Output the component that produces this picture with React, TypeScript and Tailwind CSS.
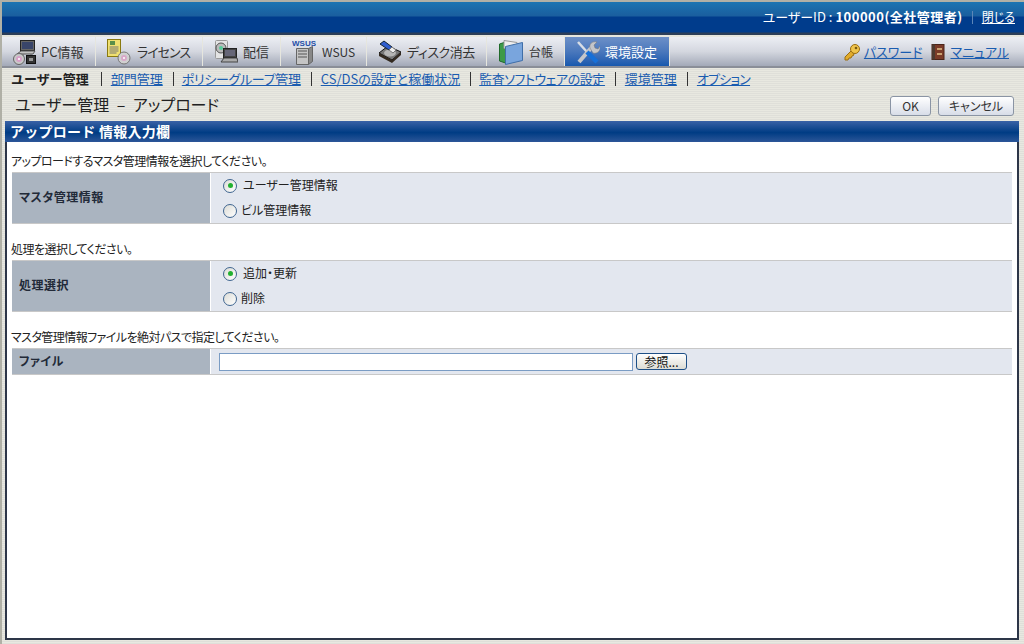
import React from 'react';

const font = "font-['Noto_Sans_CJK_JP','Liberation_Sans',sans-serif] [font-feature-settings:'palt']";

function PcIcon() {
  return (
    <svg width="24" height="26" viewBox="0 0 24 26" className="shrink-0">
      <rect x="7.5" y="1.5" width="14" height="10" fill="#666" stroke="#222" />
      <rect x="9" y="3" width="11" height="7" fill="#39456a" />
      <path d="M4 15l4-3h14l-2 3z" fill="#c2c2c2" stroke="#555" />
      <path d="M10 15v4M18 15v4" stroke="#666" />
      <circle cx="6" cy="20" r="5.5" fill="#c8c8c8" stroke="#666" />
      <circle cx="6" cy="20" r="3" fill="#d8a0c8" />
      <circle cx="6" cy="20" r="1" fill="#fff" />
      <rect x="13.5" y="16.5" width="9" height="8" fill="#333" stroke="#111" />
      <rect x="16" y="19" width="4" height="3" fill="#999" />
    </svg>
  );
}

function LicenseIcon() {
  return (
    <svg width="24" height="26" viewBox="0 0 24 26" className="shrink-0">
      <rect x="0.5" y="0.5" width="13" height="17" fill="#f0e070" stroke="#8a7a10" />
      <rect x="3" y="2" width="5" height="4" fill="#5a8f4a" />
      <path d="M2.5 8h9M2.5 10h9M2.5 12h9M2.5 14h7" stroke="#777" />
      <circle cx="17" cy="19" r="6" fill="#d0d0d0" stroke="#777" />
      <circle cx="17" cy="19" r="3" fill="#d8a8c8" />
      <circle cx="17" cy="19" r="1" fill="#fff" />
    </svg>
  );
}

function DeliveryIcon() {
  return (
    <svg width="24" height="26" viewBox="0 0 24 26" className="shrink-0">
      <rect x="1.5" y="1.5" width="12" height="18" rx="1" fill="#e4e4e4" stroke="#999" />
      <circle cx="7" cy="9" r="5" fill="#bbb" stroke="#555" />
      <circle cx="7" cy="9" r="2" fill="#5c9" />
      <rect x="9.5" y="9.5" width="13" height="9" fill="#444" stroke="#222" />
      <rect x="11" y="11" width="10" height="6" fill="#667" />
      <path d="M7 23l3-4h13l1 4z" fill="#aaa" stroke="#444" />
    </svg>
  );
}

function WsusIcon() {
  return (
    <svg width="24" height="26" viewBox="0 0 24 26" className="shrink-0">
      <text x="0" y="7" fontSize="8" fontWeight="700" fill="#1f4fa8" fontFamily="Liberation Sans, sans-serif">WSUS</text>
      <path d="M4.5 9.5h12v16h-12z" fill="#c4c4c4" stroke="#666" />
      <path d="M16.5 9.5l4-2v15l-4 3z" fill="#888" stroke="#666" />
      <path d="M6 12h9M6 15h9M6 18h9" stroke="#555" />
    </svg>
  );
}

function DiskIcon() {
  return (
    <svg width="24" height="24" viewBox="0 0 24 24" className="shrink-0">
      <path d="M1 13l9-7 13 6-9 8z" fill="#777" stroke="#111" />
      <path d="M1 13v3l13 7v-3zM14 20v3l9-8v-3z" fill="#332a20" />
      <ellipse cx="12" cy="13" rx="6" ry="3.5" fill="#b5b5b5" />
      <path d="M2 4l4-3 8 6-3 3z" fill="#2f5ed0" stroke="#123" />
      <path d="M11 10l3-3 4 3-3 3z" fill="#eee" stroke="#777" />
    </svg>
  );
}

function LedgerIcon() {
  return (
    <svg width="24" height="26" viewBox="0 0 24 26" className="shrink-0">
      <path d="M0.5 5l6-2v21l-6-2z" fill="#3d9a48" stroke="#1f6a2a" />
      <path d="M5 1.5l13 2v6H5z" fill="#eee" stroke="#999" />
      <path d="M6.5 7.5l17-4v18l-17 4z" fill="#79a5dd" stroke="#3f6ea8" />
    </svg>
  );
}

function ToolIcon() {
  return (
    <svg width="24" height="24" viewBox="0 0 24 24" className="shrink-0">
      <path d="M2 2l9 10" stroke="#d8dee6" strokeWidth="2.5" />
      <path d="M3 22l12-14" stroke="#c4c6ca" strokeWidth="4" />
      <path d="M14 8c-1-4 2-7 7-6l-3 3 1 3 3 1 2-3c1 5-3 8-7 7z" fill="#c4c6ca" stroke="#777" strokeWidth="0.5" />
      <path d="M11 12l10 10" stroke="#1670d8" strokeWidth="4.5" />
    </svg>
  );
}

function KeyIcon() {
  return (
    <svg width="18" height="18" viewBox="0 0 18 18" className="shrink-0">
      <path d="M9 7l-7 7v3h3l1-2h2l1-2 2-1z" fill="#e2ac2c" stroke="#9a6d10" />
      <circle cx="12" cy="6" r="4.5" fill="#efc44c" stroke="#9a6d10" />
      <circle cx="13" cy="5" r="1.3" fill="#7a5a10" />
    </svg>
  );
}

function BookIcon() {
  return (
    <svg width="14" height="16" viewBox="0 0 14 16" className="shrink-0">
      <rect x="1" y="0.5" width="12" height="15" fill="#7a3a28" stroke="#4a2418" />
      <rect x="1" y="0.5" width="3" height="15" fill="#4d3a30" />
      <rect x="6" y="4" width="5" height="2" fill="#c9a070" />
      <rect x="6" y="9" width="5" height="2" fill="#c9a070" />
    </svg>
  );
}

const tabs = [
  { label: 'PC情報', box: 'w-[93px] pl-[11px] gap-[4px]', text: 'text-[13px]', icon: <PcIcon /> },
  { label: 'ライセンス', box: 'w-[106px] pl-[11px] gap-[6px]', text: 'text-[13px] tracking-[-1px]', icon: <LicenseIcon /> },
  { label: '配信', box: 'w-[77px] pl-[11px] gap-[5px]', text: 'text-[13px]', icon: <DeliveryIcon /> },
  { label: 'WSUS', box: 'w-[85px] pl-[11px] gap-[6px]', text: 'text-[12px]', icon: <WsusIcon /> },
  { label: 'ディスク消去', box: 'w-[119px] pl-[11px] gap-[5px]', text: 'text-[13px] tracking-[-0.5px]', icon: <DiskIcon /> },
  { label: '台帳', box: 'w-[77px] pl-[12px] gap-[6px]', text: 'text-[12px]', icon: <LedgerIcon /> },
];

const subLinks = [
  { label: '部門管理', cls: '' },
  { label: 'ポリシーグループ管理', cls: 'tracking-[-0.3px] -ml-px' },
  { label: 'CS/DSの設定と稼働状況', cls: '' },
  { label: '監査ソフトウェアの設定', cls: 'tracking-[-0.45px] -ml-px' },
  { label: '環境管理', cls: '' },
  { label: 'オプション', cls: 'tracking-[-0.8px]' },
];

function Radio({ checked, label }: { checked: boolean; label: string }) {
  return (
    <div className="flex items-center h-[25px]">
      <span className="w-[14px] h-[14px] rounded-full border border-[#3f6590] bg-gradient-to-br from-[#dcdcd6] to-white flex items-center justify-center">
        {checked && <span className="w-[5px] h-[5px] rounded-full bg-[#22b030]" />}
      </span>
      <span className={`pb-px ${checked ? 'ml-[6px]' : 'ml-[4px]'}`}>{label}</span>
    </div>
  );
}

function FormRow({ title, caption, children, height }: { title: string; caption: string; children: React.ReactNode; height: string }) {
  return (
    <div className="mb-[15px]">
      <div className="h-[21px] pl-[4px] flex items-end pb-[4px] text-[12px] leading-[14px] tracking-[-0.55px] text-[#222]">{caption}</div>
      <div className={`mx-[5px] flex border-y border-[#c8c8c8] ${height}`}>
        <div className="w-[199px] shrink-0 bg-[#aab4c0] border-r border-white pl-[7px] pb-[2px] flex items-center text-[12px] tracking-[0.5px] font-bold text-[#222a38]">{title}</div>
        <div className="flex-1 bg-[#e3e7ef] text-[12px] text-[#222]">{children}</div>
      </div>
    </div>
  );
}

export default function App() {
  return (
    <div className={`${font} w-[1024px] h-[644px] overflow-hidden flex flex-col border-t-2 border-l-2 border-[#b0b0a6] bg-[repeating-linear-gradient(#e8e8e0_0px,#e8e8e0_1px,#dfdfd9_1px,#dfdfd9_2px)] text-[#222]`}>
      {/* ヘッダー */}
      <div className="h-[33px] shrink-0 bg-[linear-gradient(#1b74b2_0px,#1a5e9e_14px,#003c8c_15px,#003c8c_30px,#2c3e58_31px)] flex items-center justify-end pr-[9px] pb-[3px] text-white">
        <span className="text-[13px]">ユーザーID : </span>
        <span className="ml-[3px] text-[13px] font-bold tracking-[0.5px] [font-feature-settings:normal]">100000(全社管理者)</span>
        <span className="mx-[9px] h-[13px] w-px bg-[#5c86b8]" />
        <span className="text-[12px] underline">閉じる</span>
      </div>

      {/* タブ */}
      <div className="h-[33px] shrink-0 pt-[2px] flex items-stretch gap-px bg-[#e6e6de] border-b-2 border-[#8a8e98]">
        {tabs.map(tab => (
          <div
            key={tab.label}
            className={`${tab.box} shrink-0 flex items-center overflow-hidden bg-gradient-to-b from-[#eceef4] via-[#d4d7df] to-[#a3a9b8] text-[#333]`}
          >
            {tab.icon}
            <span className={tab.text}>{tab.label}</span>
          </div>
        ))}
        <div className="w-[104px] shrink-0 pl-[11px] gap-[5px] flex items-center bg-gradient-to-b from-[#6d90c8] via-[#4a78bc] to-[#1658ae] text-[13px] text-white">
          <ToolIcon />
          <span>環境設定</span>
        </div>
        <div className="flex-1 flex items-center justify-end pr-[15px] bg-gradient-to-b from-[#eceef4] via-[#d4d7df] to-[#a3a9b8] text-[13px] text-[#1a5cb0]">
          <KeyIcon />
          <span className="ml-[3px] underline">パスワード</span>
          <span className="ml-[9px]"><BookIcon /></span>
          <span className="ml-[5px] underline">マニュアル</span>
        </div>
      </div>

      {/* サブメニュー */}
      <div className="h-[22px] shrink-0 flex items-center pl-[9px] text-[13px] leading-[16px]">
        <span className="font-bold text-[#222] [font-feature-settings:normal] mr-[2px]">ユーザー管理</span>
        {subLinks.map(link => (
          <React.Fragment key={link.label}>
            <span className="ml-[10px] mr-[9px] h-[14px] w-px bg-[#333]" />
            <span className={`underline text-[#1a5cb0] ${link.cls}`}>{link.label}</span>
          </React.Fragment>
        ))}
      </div>

      {/* タイトル */}
      <div className="h-[31px] shrink-0 flex items-center pl-[13px] pr-[10px]">
        <span className="text-[16px] text-[#222] pb-[3px]">ユーザー管理 <span className="mx-[4px]">–</span> アップロード</span>
        <div className="ml-auto flex gap-[7px] text-[12px] text-[#333]">
          <button className="w-[41px] h-[20px] rounded-[3px] border border-[#8a94a4] bg-gradient-to-b from-white to-[#d8dde8]">OK</button>
          <button className="w-[76px] h-[20px] rounded-[3px] border border-[#8a94a4] bg-gradient-to-b from-white to-[#d8dde8]">キャンセル</button>
        </div>
      </div>

      {/* パネル */}
      <div className="flex-1 flex flex-col ml-[3px] mr-[5px] mb-[4px] border-x-2 border-b-2 border-[#2d3648] bg-white">
        <div className="h-[21px] shrink-0 -mx-[2px] pl-[5px] flex items-center bg-[linear-gradient(#3a62a6,#003c84_55%,#2c5698)] text-[14px] tracking-[0.25px] font-bold text-white [font-feature-settings:normal]">
          アップロード 情報入力欄
        </div>
        <div className="pt-[9px]">
          <FormRow title="マスタ管理情報" caption="アップロードするマスタ管理情報を選択してください。" height="h-[52px]">
            <div className="pl-[12px]">
              <Radio checked label="ユーザー管理情報" />
              <Radio checked={false} label="ビル管理情報" />
            </div>
          </FormRow>
          <FormRow title="処理選択" caption="処理を選択してください。" height="h-[52px]">
            <div className="pl-[12px]">
              <Radio checked label="追加・更新" />
              <Radio checked={false} label="削除" />
            </div>
          </FormRow>
          <FormRow title="ファイル" caption="マスタ管理情報ファイルを絶対パスで指定してください。" height="h-[27px]">
            <div className="h-full pl-[8px] flex items-center gap-[3px]">
              <input className="w-[414px] h-[18px] bg-white border border-[#7a9cc4] outline-none" />
              <button className="w-[51px] h-[17px] rounded-[3px] border border-[#1d4f86] bg-gradient-to-b from-white to-[#dcdcd4] text-[12px] leading-[12px] text-[#111]">参照...</button>
            </div>
          </FormRow>
        </div>
      </div>
    </div>
  );
}
